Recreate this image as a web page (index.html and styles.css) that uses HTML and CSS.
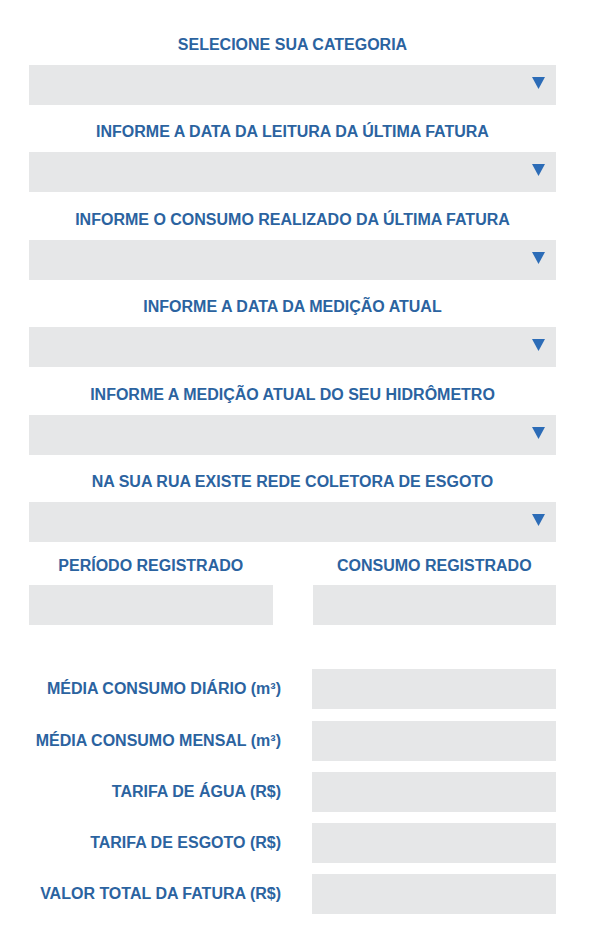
FILE: index.html
```html
<!DOCTYPE html>
<html lang="pt-BR">
<head>
<meta charset="utf-8">
<title>Simulador de Fatura</title>
<link rel="stylesheet" href="styles.css">
</head>
<body>
<main class="form">
  <div class="field">
    <div class="label">SELECIONE SUA CATEGORIA</div>
    <div class="select"><svg class="arrow" viewBox="0 0 13 12"><polygon points="0,0 13,0 6.5,12"/></svg></div>
  </div>
  <div class="field">
    <div class="label">INFORME A DATA DA LEITURA DA ÚLTIMA FATURA</div>
    <div class="select"><svg class="arrow" viewBox="0 0 13 12"><polygon points="0,0 13,0 6.5,12"/></svg></div>
  </div>
  <div class="field">
    <div class="label">INFORME O CONSUMO REALIZADO DA ÚLTIMA FATURA</div>
    <div class="select"><svg class="arrow" viewBox="0 0 13 12"><polygon points="0,0 13,0 6.5,12"/></svg></div>
  </div>
  <div class="field">
    <div class="label">INFORME A DATA DA MEDIÇÃO ATUAL</div>
    <div class="select"><svg class="arrow" viewBox="0 0 13 12"><polygon points="0,0 13,0 6.5,12"/></svg></div>
  </div>
  <div class="field">
    <div class="label">INFORME A MEDIÇÃO ATUAL DO SEU HIDRÔMETRO</div>
    <div class="select"><svg class="arrow" viewBox="0 0 13 12"><polygon points="0,0 13,0 6.5,12"/></svg></div>
  </div>
  <div class="field">
    <div class="label">NA SUA RUA EXISTE REDE COLETORA DE ESGOTO</div>
    <div class="select"><svg class="arrow" viewBox="0 0 13 12"><polygon points="0,0 13,0 6.5,12"/></svg></div>
  </div>

  <div class="pair">
    <div class="col">
      <div class="label">PERÍODO REGISTRADO</div>
      <div class="box"></div>
    </div>
    <div class="col">
      <div class="label">CONSUMO REGISTRADO</div>
      <div class="box"></div>
    </div>
  </div>

  <div class="results">
    <div class="rlabel">MÉDIA CONSUMO DIÁRIO (m³)</div><div class="box"></div>
    <div class="rlabel">MÉDIA CONSUMO MENSAL (m³)</div><div class="box"></div>
    <div class="rlabel">TARIFA DE ÁGUA (R$)</div><div class="box"></div>
    <div class="rlabel">TARIFA DE ESGOTO (R$)</div><div class="box"></div>
    <div class="rlabel">VALOR TOTAL DA FATURA (R$)</div><div class="box"></div>
  </div>
</main>
</body>
</html>
```

FILE: styles.css
```css
html, body {
  margin: 0;
  padding: 0;
  background: #ffffff;
}

body {
  font-family: "Liberation Sans", Arial, sans-serif;
  color: #2b63a0;
}

.form {
  width: 527px;
  padding: 35px 34px 0 29px;
  display: flex;
  flex-direction: column;
}

.label,
.rlabel {
  font-size: 16px;
  font-weight: bold;
  line-height: 20px;
  white-space: nowrap;
}

.label {
  text-align: center;
}

.field {
  display: flex;
  flex-direction: column;
  gap: 10px;
  margin-bottom: 17.4px;
}

.select,
.box {
  height: 40px;
  background: #e6e7e8;
}

.select {
  display: flex;
  justify-content: flex-end;
  align-items: flex-start;
}

.arrow {
  width: 13px;
  height: 12px;
  margin: 12px 11px 0 0;
  fill: #2c6cb7;
}

.pair {
  display: grid;
  grid-template-columns: 1fr 1fr;
  column-gap: 40px;
  margin-top: -3px;
}

.col {
  display: flex;
  flex-direction: column;
  gap: 9px;
}

.results {
  display: grid;
  grid-template-columns: 1fr 244px;
  column-gap: 31px;
  row-gap: 11.2px;
  align-items: center;
  margin-top: 44px;
}

.rlabel {
  text-align: right;
}
```
